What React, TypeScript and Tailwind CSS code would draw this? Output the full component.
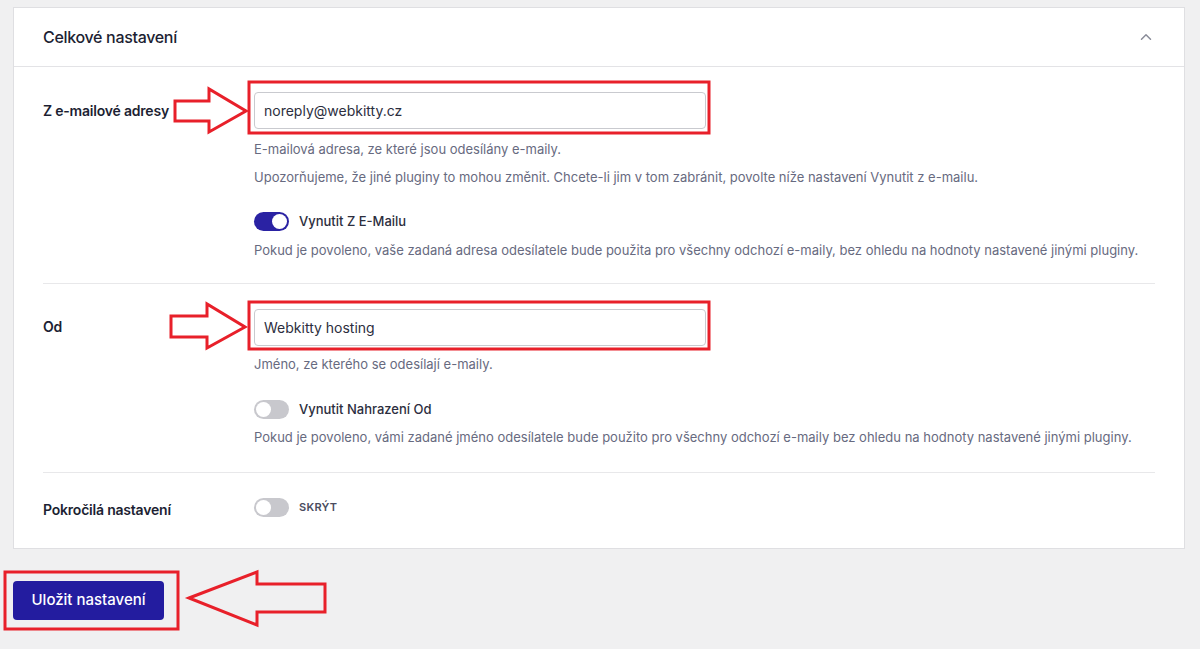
import { ChevronUp } from 'lucide-react'

function Toggle({ on }: { on: boolean }) {
  return (
    <span
      className={`relative inline-flex h-[19px] w-[35px] shrink-0 items-center rounded-full ${
        on ? 'bg-[#2a22a3]' : 'bg-[#c8c8cd]'
      }`}
    >
      <span
        className={`absolute top-[2px] h-[15px] w-[15px] rounded-full bg-white ${on ? 'left-[18px]' : 'left-[2px]'}`}
      />
    </span>
  )
}

function Row({
  label,
  children,
  className,
}: {
  label: string
  children: React.ReactNode
  className: string
}) {
  return (
    <div className={`grid grid-cols-[211px_1fr] ${className}`}>
      <div className="flex h-9 items-center text-[14px] font-semibold tracking-[-0.015em] text-[#1d1f33]">{label}</div>
      <div>{children}</div>
    </div>
  )
}

function Field({ value }: { value: string }) {
  return (
    <input
      readOnly
      value={value}
      className="h-[37px] w-[452px] rounded-[4px] border border-[#c9cacf] bg-white px-[9px] text-[14px] text-[#2c2e3e] outline-none"
    />
  )
}

function Hint({ children, className = '' }: { children: React.ReactNode; className?: string }) {
  return <p className={`text-[13px] leading-5 text-[#676a80] ${className}`}>{children}</p>
}

export default function App() {
  return (
    <div
      className="relative h-[649px] w-[1200px] overflow-hidden bg-[#f0f0f1] pl-[13px] pr-[15px] pt-[7px]"
      style={{ fontFamily: 'Inter, "Noto Sans", sans-serif' }}
    >
      <div className="border border-[#dfdfe2] bg-white">
        <div className="flex h-[59px] items-center justify-between border-b border-[#e3e3e6] pl-[29px] pr-[29px]">
          <h2 className="text-[16px] font-medium tracking-[-0.02em] text-[#1d1f33]">Celkové nastavení</h2>
          <ChevronUp size={18} strokeWidth={2} className="text-[#8a8c99]" />
        </div>

        <div className="px-[29px]">
          <Row label="Z e-mailové adresy" className="border-b border-[#e8e8ea] pt-[25px] pb-[23px]">
            <Field value="noreply@webkitty.cz" />
            <Hint className="mt-[10px]">E-mailová adresa, ze které jsou odesílány e-maily.</Hint>
            <Hint className="mt-2">
              Upozorňujeme, že jiné pluginy to mohou změnit. Chcete-li jim v tom zabránit, povolte níže nastavení Vynutit z e-mailu.
            </Hint>
            <div className="mt-[25px] flex items-center gap-[10px]">
              <Toggle on />
              <span className="text-[13px] font-medium text-[#2c2e3e]">Vynutit Z E-Mailu</span>
            </div>
            <Hint className="mt-[8px]">
              Pokud je povoleno, vaše zadaná adresa odesílatele bude použita pro všechny odchozí e-maily, bez ohledu na hodnoty nastavené jinými pluginy.
            </Hint>
          </Row>

          <Row label="Od" className="border-b border-[#e8e8ea] pt-[25px] pb-[25px]">
            <Field value="Webkitty hosting" />
            <Hint className="mt-[8px]">Jméno, ze kterého se odesílají e-maily.</Hint>
            <div className="mt-[26px] flex items-center gap-[10px]">
              <Toggle on={false} />
              <span className="text-[13px] font-medium text-[#2c2e3e]">Vynutit Nahrazení Od</span>
            </div>
            <Hint className="mt-[8px]">
              Pokud je povoleno, vámi zadané jméno odesílatele bude použito pro všechny odchozí e-maily bez ohledu na hodnoty nastavené jinými pluginy.
            </Hint>
          </Row>

          <Row label="Pokročilá nastavení" className="pt-[18px] pb-[21px]">
            <div className="flex h-9 items-center gap-[10px] -mt-[2px]">
              <Toggle on={false} />
              <span className="text-[11px] font-semibold tracking-wide text-[#4a4c5e]">SKRÝT</span>
            </div>
          </Row>
        </div>
      </div>

      <button className="mt-[32px] h-[39px] w-[151px] rounded-[4px] bg-[#231c9f] text-[15px] font-medium text-white">
        Uložit nastavení
      </button>

      <svg className="pointer-events-none absolute left-0 top-0" width="1200" height="649" fill="none" stroke="#e8202a" strokeWidth="3" strokeLinejoin="miter">
        <rect x="249" y="82" width="460" height="51" />
        <polygon points="175,101 209,101 209,89 246,111 209,132 209,121 175,121" />
        <rect x="249" y="302" width="460" height="47" />
        <polygon points="171,316 207,316 207,304 245,327 207,348 207,337 171,337" />
        <rect x="5" y="572" width="173" height="57" />
        <polygon points="189,598 257,572 257,584 325,584 325,612 257,612 257,625" />
      </svg>
    </div>
  )
}
